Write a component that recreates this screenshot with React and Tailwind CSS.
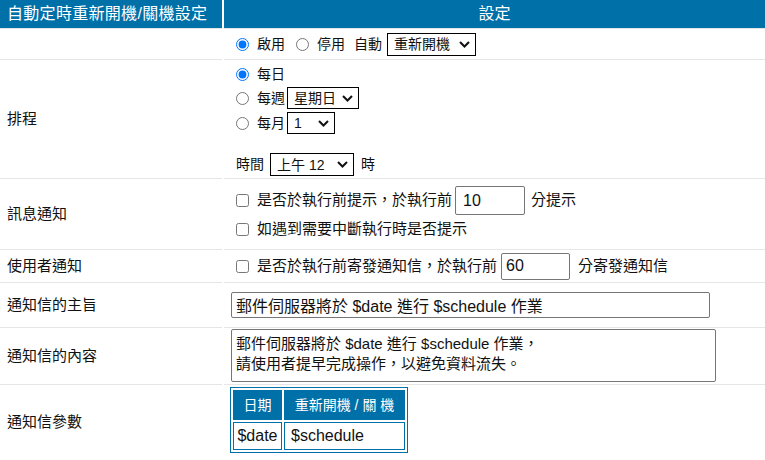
import React from "react";

const BLUE = "bg-[#0070a8]";

function Chevron() {
  return (
    <svg width="11" height="7" viewBox="0 0 11 7" className="shrink-0">
      <polyline points="1,1 5.5,5.5 10,1" fill="none" stroke="#111" strokeWidth="2" />
    </svg>
  );
}

function Sel({ children, w, h = "h-[22px]", className = "" }) {
  return (
    <span
      className={`inline-flex items-center justify-between border border-black bg-white pl-[6px] pr-[5px] text-[14px] leading-none ${w} ${h} ${className}`}
    >
      <span>{children}</span>
      <Chevron />
    </span>
  );
}

function Radio({ checked, name, className = "" }) {
  return (
    <input
      type="radio"
      name={name}
      defaultChecked={checked}
      className={`m-0 h-[13px] w-[13px] shrink-0 ${className}`}
    />
  );
}

function Check({ className = "" }) {
  return <input type="checkbox" className={`m-0 h-[13px] w-[13px] shrink-0 ${className}`} />;
}

function Label({ children, h }) {
  return (
    <div className={`flex items-center border-b border-[#e6e6e6] pl-[7px] text-[15px] ${h}`}>
      {children}
    </div>
  );
}

function Cell({ children, h, className = "" }) {
  return <div className={`border-b border-[#e6e6e6] ${h} ${className}`}>{children}</div>;
}

export default function App() {
  return (
    <div className="w-[765px] h-[460px] overflow-hidden bg-white text-[#111] font-['Liberation_Sans','Noto_Sans_CJK_TC',sans-serif]">
      <div className="grid grid-cols-[222px_1fr] gap-x-[2px]">
        {/* header */}
        <div className={`h-[29px] border-b border-[#e6e6e6] ${BLUE} flex items-center pl-[7px] text-[16px] tracking-[0.3px] text-white`}>
          自動定時重新開機/關機設定
        </div>
        <div className={`h-[29px] border-b border-[#e6e6e6] ${BLUE} flex items-center justify-center text-[16px] text-white`}>
          設定
        </div>

        {/* row 1 */}
        <Label h="h-[31px]"></Label>
        <Cell h="h-[31px]" className="flex items-center pl-[12px] text-[14px]">
          <Radio name="en" checked />
          <span className="ml-[8px]">啟用</span>
          <Radio name="en" className="ml-[11px]" />
          <span className="ml-[8px]">停用</span>
          <span className="ml-[9px]">自動</span>
          <Sel w="w-[89px]" h="h-[23px]" className="ml-[5px]">重新開機</Sel>
        </Cell>

        {/* schedule */}
        <Label h="h-[119px]">排程</Label>
        <Cell h="h-[119px]" className="flex flex-col pl-[12px] pt-[3px] text-[14px]">
          <div className="flex h-[22px] items-center">
            <Radio name="sch" checked />
            <span className="ml-[8px]">每日</span>
          </div>
          <div className="mt-[2px] flex h-[22px] items-center">
            <Radio name="sch" />
            <span className="ml-[8px]">每週</span>
            <Sel w="w-[72px]" h="h-[22px]" className="ml-[2px]">星期日</Sel>
          </div>
          <div className="mt-[3px] flex h-[22px] items-center">
            <Radio name="sch" />
            <span className="ml-[8px]">每月</span>
            <Sel w="w-[48px]" h="h-[22px]" className="ml-[2px]">1</Sel>
          </div>
          <div className="mt-[19px] flex h-[23px] items-center">
            <span>時間</span>
            <Sel w="w-[84px]" h="h-[23px]" className="ml-[6px]">上午 12</Sel>
            <span className="ml-[7px]">時</span>
          </div>
        </Cell>

        {/* message */}
        <Label h="h-[71px]">訊息通知</Label>
        <Cell h="h-[71px]" className="flex flex-col pl-[12px] pt-[7px] text-[15px]">
          <div className="flex h-[29px] items-center">
            <Check />
            <span className="ml-[8px]">是否於執行前提示，於執行前</span>
            <input
              type="text"
              defaultValue="10"
              className="ml-[3px] h-[29px] w-[70px] rounded-[2px] border border-[#767676] px-[7px] text-[16px] outline-none"
            />
            <span className="ml-[6px]">分提示</span>
          </div>
          <div className="mt-[3px] flex h-[22px] items-center">
            <Check />
            <span className="ml-[8px]">如遇到需要中斷執行時是否提示</span>
          </div>
        </Cell>

        {/* user notify */}
        <Label h="h-[33px]">使用者通知</Label>
        <Cell h="h-[33px]" className="flex items-center pl-[12px] text-[15px]">
          <Check />
          <span className="ml-[8px]">是否於執行前寄發通知信，於執行前</span>
          <input
            type="text"
            defaultValue="60"
            className="ml-[4px] h-[27px] w-[69px] rounded-[2px] border border-[#767676] px-[4px] text-[16px] outline-none"
          />
          <span className="ml-[8px]">分寄發通知信</span>
        </Cell>

        {/* subject */}
        <Label h="h-[45px]">通知信的主旨</Label>
        <Cell h="h-[45px]" className="flex items-center pl-[7px]">
          <input
            type="text"
            defaultValue="郵件伺服器將於 $date 進行 $schedule 作業"
            className="h-[26px] w-[479px] rounded-[2px] border border-[#767676] px-[4px] text-[16px] outline-none"
          />
        </Cell>

        {/* content */}
        <Label h="h-[57px]">通知信的內容</Label>
        <Cell h="h-[57px]" className="pl-[7px] pt-[1px]">
          <textarea
            readOnly
            value={"郵件伺服器將於 $date 進行 $schedule 作業，\n請使用者提早完成操作，以避免資料流失。"}
            className="block h-[53px] w-[485px] resize-none overflow-hidden rounded-[2px] border border-[#767676] px-[4px] pt-[4px] text-[15px] leading-[20px] outline-none"
          />
        </Cell>

        {/* params */}
        <div className="flex h-[75px] items-center pl-[7px] text-[15px]">通知信參數</div>
        <div className="h-[75px] pl-[6px] pt-[2px]">
          <div className="inline-grid grid-cols-[49px_121px] grid-rows-[30px_28px] gap-[2px] border border-[#0070a8] p-[2px]">
            <div className={`${BLUE} flex items-center justify-center text-[14px] text-white`}>日期</div>
            <div className={`${BLUE} flex items-center justify-center text-[14px] text-white`}>重新開機 / 關 機</div>
            <div className="flex items-center justify-center border border-[#0070a8] text-[16px]">$date</div>
            <div className="flex items-center border border-[#0070a8] pl-[6px] text-[16px]">$schedule</div>
          </div>
        </div>
      </div>
    </div>
  );
}
